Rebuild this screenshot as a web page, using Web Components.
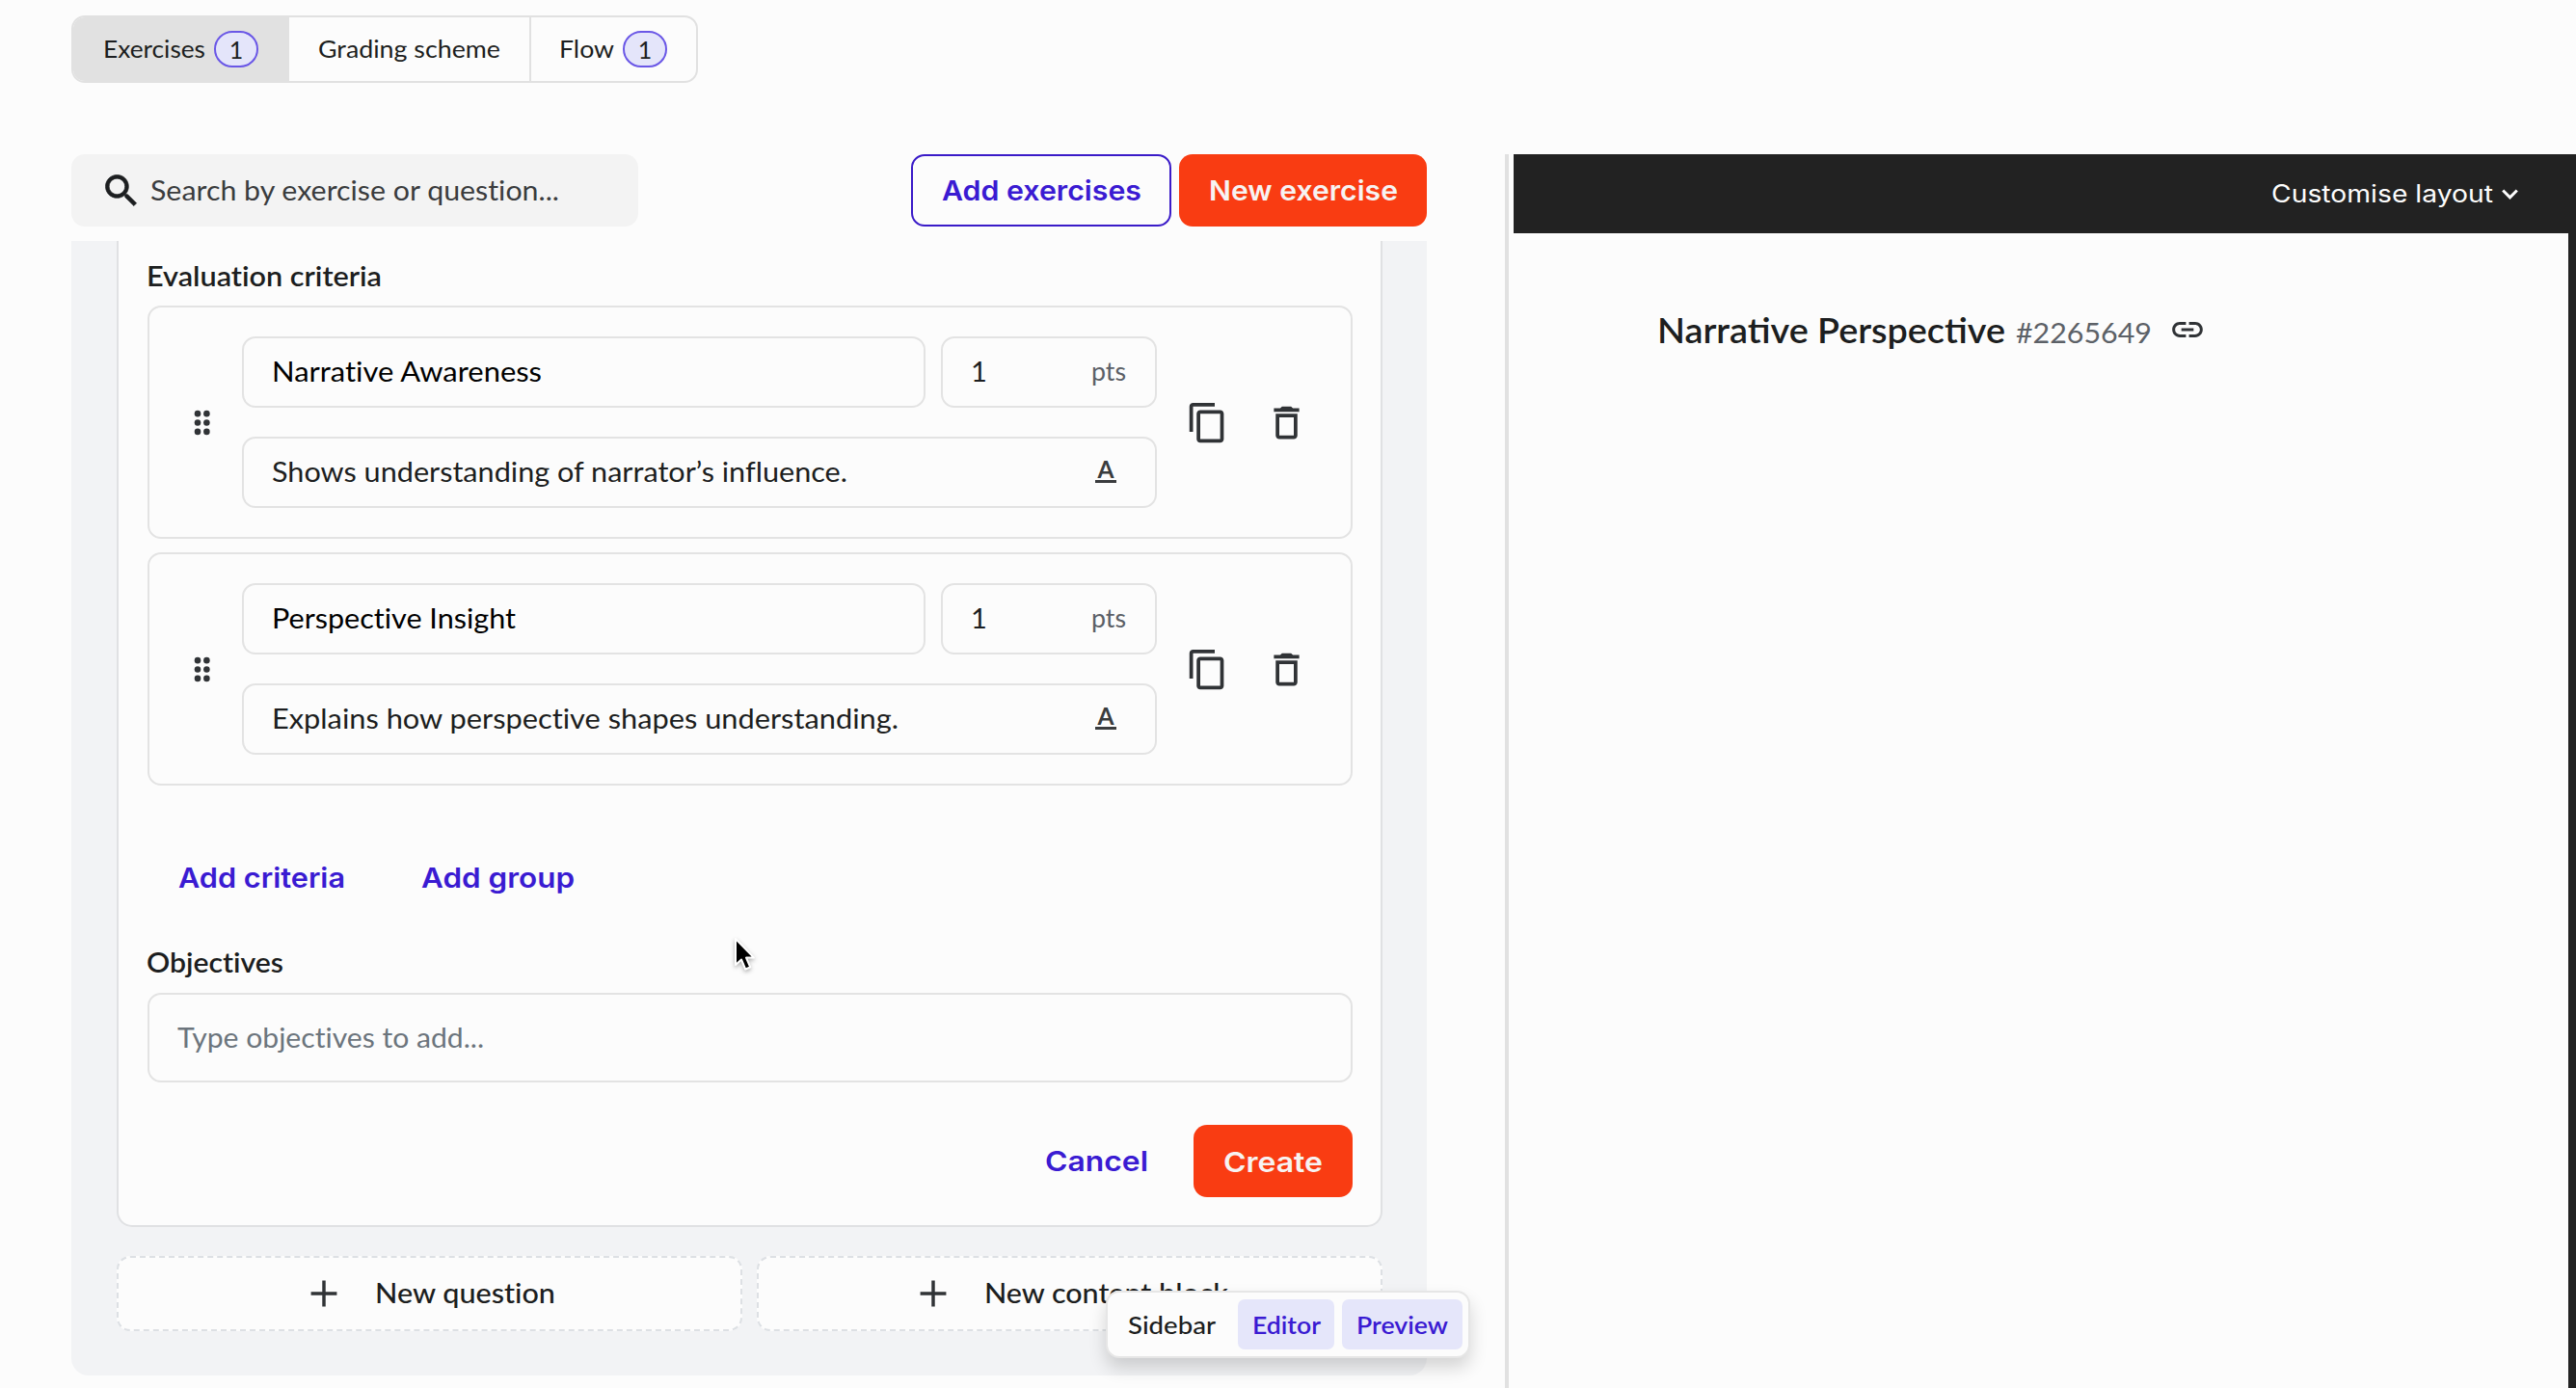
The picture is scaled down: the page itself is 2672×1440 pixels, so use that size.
<!DOCTYPE html>
<html lang="en">
<head>
<meta charset="utf-8">
<title>Exercise editor</title>
<style>
  html, body { margin: 0; height: 100%; overflow: hidden; }
  body { background: #fcfcfc; color: #1c1e20; font: 29px/36px Lato, "Open Sans", sans-serif; }
</style>
</head>
<body>
<app-shell></app-shell>
<script>
const define = (name, html, setup) => {
  const template = document.createElement('template');
  template.innerHTML = html;
  customElements.define(name, class extends HTMLElement {
    constructor() {
      super();
      this.attachShadow({ mode: 'open' }).append(template.content.cloneNode(true));
    }
    connectedCallback() { if (setup) setup(this, this.shadowRoot); }
  });
};

// Single line of text whose letters are widened to fill the width in "w".
define('fit-text', `<style>
  :host { display: block; flex: none; white-space: nowrap; font-variant-ligatures: none; }
  span { display: inline-block; transform-origin: 0 50%; }
</style><span><slot></slot></span>`, (el, root) => {
  const w = +el.getAttribute('w');
  const span = root.querySelector('span');
  el.style.width = w + 'px';
  span.style.transform = 'none';
  span.style.transform = `translateX(1px) scaleX(${((w - 2) / span.getBoundingClientRect().width).toFixed(4)})`;
});

const icons = {
  search: '<path d="M15.5 14h-.79l-.28-.27C15.41 12.59 16 11.11 16 9.5 16 5.91 13.09 3 9.5 3S3 5.91 3 9.5 5.91 16 9.5 16c1.61 0 3.09-.59 4.23-1.57l.27.28v.79l5 4.99L20.49 19l-4.99-5zm-6 0C7.01 14 5 11.99 5 9.5S7.01 5 9.5 5 14 7.01 14 9.5 11.99 14 9.5 14z" stroke="currentColor" stroke-width=".4"/>',
  copy: '<path d="M16 1H4c-1.1 0-2 .9-2 2v14h2V3h12V1zm3 4H8c-1.1 0-2 .9-2 2v14c0 1.1.9 2 2 2h11c1.1 0 2-.9 2-2V7c0-1.1-.9-2-2-2zm0 16H8V7h11v14z"/>',
  trash: '<path d="M16 9v10H8V9h8m-1.5-6h-5l-1 1H5v2h14V4h-3.5l-1-1zM18 7H6v12c0 1.1.9 2 2 2h8c1.1 0 2-.9 2-2V7z"/>',
  link: '<path d="M3.9 12c0-1.71 1.39-3.1 3.1-3.1h4V7H7c-2.76 0-5 2.24-5 5s2.24 5 5 5h4v-1.9H7c-1.71 0-3.1-1.39-3.1-3.1zM8 13h8v-2H8v2zm9-6h-4v1.9h4c1.71 0 3.1 1.39 3.1 3.1s-1.39 3.1-3.1 3.1h-4V17h4c2.76 0 5-2.24 5-5s-2.24-5-5-5z"/>',
  grip: '<circle cx="9.6" cy="7" r="1.75"/><circle cx="14.6" cy="7" r="1.75"/><circle cx="9.6" cy="12" r="1.75"/><circle cx="14.6" cy="12" r="1.75"/><circle cx="9.6" cy="17" r="1.75"/><circle cx="14.6" cy="17" r="1.75"/>',
  plus: '<path d="M19 12.9h-6.1V19h-1.8v-6.1H5v-1.8h6.1V5h1.8v6.1H19z"/>',
  chevron: '<path d="M5 8.2l7 7 7-7" fill="none" stroke="currentColor" stroke-width="2.9"/>'
};
define('ui-icon', `<style>
  :host { display: block; flex: none; color: #303336; }
  svg { display: block; }
</style><svg viewBox="0 0 24 24" fill="currentColor"></svg>`, (el, root) => {
  const svg = root.querySelector('svg');
  svg.setAttribute('width', el.getAttribute('size'));
  svg.setAttribute('height', el.getAttribute('size'));
  svg.innerHTML = icons[el.getAttribute('name')];
});

define('count-badge', `<style>
  :host { display: flex; align-items: center; justify-content: center; box-sizing: border-box; width: 46px; height: 38px;
    border: 2px solid #6a57e6; border-radius: 19px; background: #e4e5fa; font-size: 25px; flex: none; }
</style><slot></slot>`);

define('tab-bar', `<style>
  :host { display: flex; box-sizing: border-box; width: 650px; height: 70px; border: 2px solid #e1e1e1; border-radius: 14px;
    overflow: hidden; font-size: 25.5px; }
  div { display: flex; align-items: center; box-sizing: border-box; padding-left: 30px; flex: none; }
  div + div { border-left: 2px solid #e1e1e1; }
  fit-text { padding-bottom: 2px; }
  .on { width: 222px; background: #e1e1e1; gap: 8px; }
  .mid { width: 251px; padding-left: 29px; }
  .last { flex: 1; gap: 8px; padding-left: 28px; }
</style>
<div class="on"><fit-text w="108">Exercises</fit-text><count-badge>1</count-badge></div>
<div class="mid"><fit-text w="191">Grading scheme</fit-text></div>
<div class="last"><fit-text w="59">Flow</fit-text><count-badge>1</count-badge></div>`);

define('search-box', `<style>
  :host { display: flex; align-items: center; box-sizing: border-box; width: 588px; height: 75px; padding-left: 30px; gap: 7px;
    border-radius: 14px; background: #f3f3f3; color: #3a3c3e; }
  ui-icon { color: #1c1e20; }
  fit-text { padding-bottom: 2px; }
</style><ui-icon name="search" size="44"></ui-icon><fit-text w="426">Search by exercise or question...</fit-text>`);

define('ui-button', `<style>
  :host { display: flex; align-items: center; justify-content: center; box-sizing: border-box; height: 75px; border-radius: 14px;
    font: 600 29px/36px Inter, sans-serif; color: #3a1bd2; flex: none; }
  :host([kind=outline]) { border: 2px solid #3a1bc8; }
  :host([kind=primary]) { background: #f93c12; color: #f7f3f2; }
</style><slot></slot>`);

define('text-field', `<style>
  :host { display: flex; align-items: center; justify-content: space-between; box-sizing: border-box; height: 74px;
    border: 2px solid #e3e3e3; border-radius: 14px; padding: 0 29px 2px 28px; }
</style><slot></slot>`);

define('format-mark', `<style>
  :host { display: flex; flex-direction: column; align-items: center; width: 22px; margin-right: 11px; color: #3a3c3e; flex: none; }
  span { font: 700 24.5px/19px Lato, sans-serif; }
  i { display: block; width: 22px; height: 3px; margin-top: 2px; background: #3a3c3e; }
</style><span>A</span><i></i>`);

define('criterion-card', `<style>
  :host { display: flex; align-items: center; box-sizing: border-box; height: 242px; border: 2px solid #e3e3e3; border-radius: 14px; padding-left: 32px; }
  .fields { display: flex; flex-direction: column; gap: 30px; width: 949px; margin-left: 19px; flex: none; }
  .row { display: flex; gap: 16px; }
  .name { width: 709px; color: #000; }
  .pts { width: 224px; }
  .pts { padding-left: 29px; }
  .unit { color: #5b6066; font-size: 26px; }
  .copy { margin-left: 30px; }
  .trash { margin-left: 37px; }
</style>
<ui-icon name="grip" size="45"></ui-icon>
<div class="fields">
  <div class="row">
    <text-field class="name"><slot name="title"></slot></text-field>
    <text-field class="pts"><span>1</span><fit-text class="unit" w="38">pts</fit-text></text-field>
  </div>
  <text-field><slot name="text"></slot><format-mark></format-mark></text-field>
</div>
<ui-icon class="copy" name="copy" size="45"></ui-icon>
<ui-icon class="trash" name="trash" size="45"></ui-icon>`);

define('add-tile', `<style>
  :host { display: flex; align-items: center; box-sizing: border-box; width: 649px; height: 78px; border: 2px dashed #dde0e4; border-radius: 14px;
    background: #fcfcfc; font-weight: 500; }
</style><ui-icon name="plus" size="46"></ui-icon><slot></slot>`);

define('question-form', `<style>
  :host { display: flex; flex-direction: column; box-sizing: border-box; height: 1023px; padding: 18px 29px 29px 30px;
    border: 2px solid #e0e1e3; border-top: 0; border-radius: 0 0 16px 16px; background: #fcfcfc; }
  .label { font-weight: 600; margin-left: -2px; }
  .list { display: flex; flex-direction: column; gap: 14px; margin-top: 13px; }
  .adds { display: flex; gap: 77px; margin: 58px 0 0 31px; }
  .obj { margin-top: 32px; }
  .big { height: 93px; margin-top: 14px; color: #6c757d; }
  .actions { display: flex; justify-content: flex-end; gap: 46px; margin-top: 44px; }
  .create { width: 165px; padding-top: 2px; }
</style>
<fit-text class="label" w="246">Evaluation criteria</fit-text>
<div class="list">
  <criterion-card><fit-text slot="title" w="282">Narrative Awareness</fit-text><fit-text slot="text" w="599">Shows understanding of narrator’s influence.</fit-text></criterion-card>
  <criterion-card><fit-text slot="title" w="255">Perspective Insight</fit-text><fit-text slot="text" w="652">Explains how perspective shapes understanding.</fit-text></criterion-card>
</div>
<div class="adds"><ui-button><fit-text w="175">Add criteria</fit-text></ui-button><ui-button><fit-text w="161">Add group</fit-text></ui-button></div>
<fit-text class="label obj" w="144">Objectives</fit-text>
<text-field class="big"><fit-text w="320">Type objectives to add...</fit-text></text-field>
<div class="actions"><ui-button><fit-text w="109">Cancel</fit-text></ui-button><ui-button class="create" kind="primary"><fit-text w="105">Create</fit-text></ui-button></div>`);

define('editor-pane', `<style>
  :host { display: flex; flex-direction: column; width: 1406px; }
  .bar { display: flex; gap: 8px; }
  search-box { margin-right: auto; }
  .add { width: 270px; }
  .new { width: 257px; }
  .panel { display: flex; flex-direction: column; gap: 30px; height: 1177px; box-sizing: border-box; margin-top: 15px; padding: 0 46px 0 47px;
    background: #f2f3f5; border-radius: 0 0 18px 18px; }
  .tiles { display: flex; justify-content: space-between; }
  .q { padding-left: 190px; }
  .c { padding-left: 158px; }
  add-tile fit-text { margin-left: 29px; padding-bottom: 2px; }
</style>
<div class="bar">
  <search-box></search-box>
  <ui-button class="add" kind="outline"><fit-text w="209">Add exercises</fit-text></ui-button>
  <ui-button class="new" kind="primary"><fit-text w="198">New exercise</fit-text></ui-button>
</div>
<div class="panel">
  <question-form></question-form>
  <div class="tiles">
    <add-tile class="q"><fit-text w="189">New question</fit-text></add-tile>
    <add-tile class="c"><fit-text w="255">New content block</fit-text></add-tile>
  </div>
</div>`);

define('preview-pane', `<style>
  :host { display: flex; flex-direction: column; flex: 1; border-left: 4px solid #e1e1e1; padding-left: 5px; }
  .bar { display: flex; align-items: center; justify-content: flex-end; box-sizing: border-box; height: 82px; padding-right: 56px; gap: 4px;
    background: #222; color: #fcfcfc; font: 400 25px/36px Inter, sans-serif; }
  .bar ui-icon { color: #fcfcfc; }
  .body { display: flex; align-items: flex-start; flex: 1; border-right: 8px solid #222; padding: 79px 0 0 148px; }
  .title { font: 600 35.5px/44px Lato, sans-serif; }
  .id { font-size: 29px; line-height: 44px; padding: 2px 0 0 9px; color: #5c6167; }
  ui-icon.link { margin: 2px 0 0 17px; }
</style>
<div class="bar"><fit-text w="232">Customise layout</fit-text><ui-icon name="chevron" size="25"></ui-icon></div>
<div class="body"><fit-text class="title" w="363">Narrative Perspective</fit-text><div class="id"><fit-text w="143">#2265649</fit-text></div><ui-icon class="link" name="link" size="38"></ui-icon></div>`);

define('pane-switch', `<style>
  :host { position: absolute; left: 1147px; top: 1339px; display: flex; align-items: center; gap: 8px; box-sizing: border-box; width: 378px; height: 70px;
    padding-left: 6px; border: 2px solid #e6e6e6; border-radius: 14px; background: #fcfcfc; box-shadow: 0 10px 18px rgba(0,0,0,.16);
    font: 500 25.5px/34px Lato, sans-serif; }
  div { display: flex; justify-content: center; align-items: center; height: 52px; border-radius: 7px; flex: none; }
  .side { width: 121px; }
  .on { background: #e5e6fa; color: #3a1bd2; font-weight: 600; }
  .ed { width: 100px; }
  .pv { width: 125px; }
</style>
<div class="side"><fit-text w="93">Sidebar</fit-text></div><div class="on ed"><fit-text w="73">Editor</fit-text></div><div class="on pv"><fit-text w="97">Preview</fit-text></div>`);

define('mouse-pointer', `<style>
  :host { position: absolute; left: 758px; top: 970px; display: block; }
  svg { display: block; filter: drop-shadow(0 2px 2px rgba(0,0,0,.3)); }
</style><svg width="28" height="42" viewBox="0 0 28 42"><path d="M5 4v27l6-5.5 4.2 10 5-2.1-4.2-9.8h8z" fill="#000" stroke="#fff" stroke-width="2" stroke-linejoin="round"/></svg>`);

define('app-shell', `<style>
  :host { display: flex; flex-direction: column; height: 1440px; box-sizing: border-box; padding-top: 16px; }
  tab-bar { margin-left: 74px; flex: none; }
  main { display: flex; flex: 1; margin-top: 74px; padding-left: 74px; gap: 81px; }
</style>
<tab-bar></tab-bar>
<main><editor-pane></editor-pane><preview-pane></preview-pane></main>
<pane-switch></pane-switch>
<mouse-pointer></mouse-pointer>`);
</script>
</body>
</html>
